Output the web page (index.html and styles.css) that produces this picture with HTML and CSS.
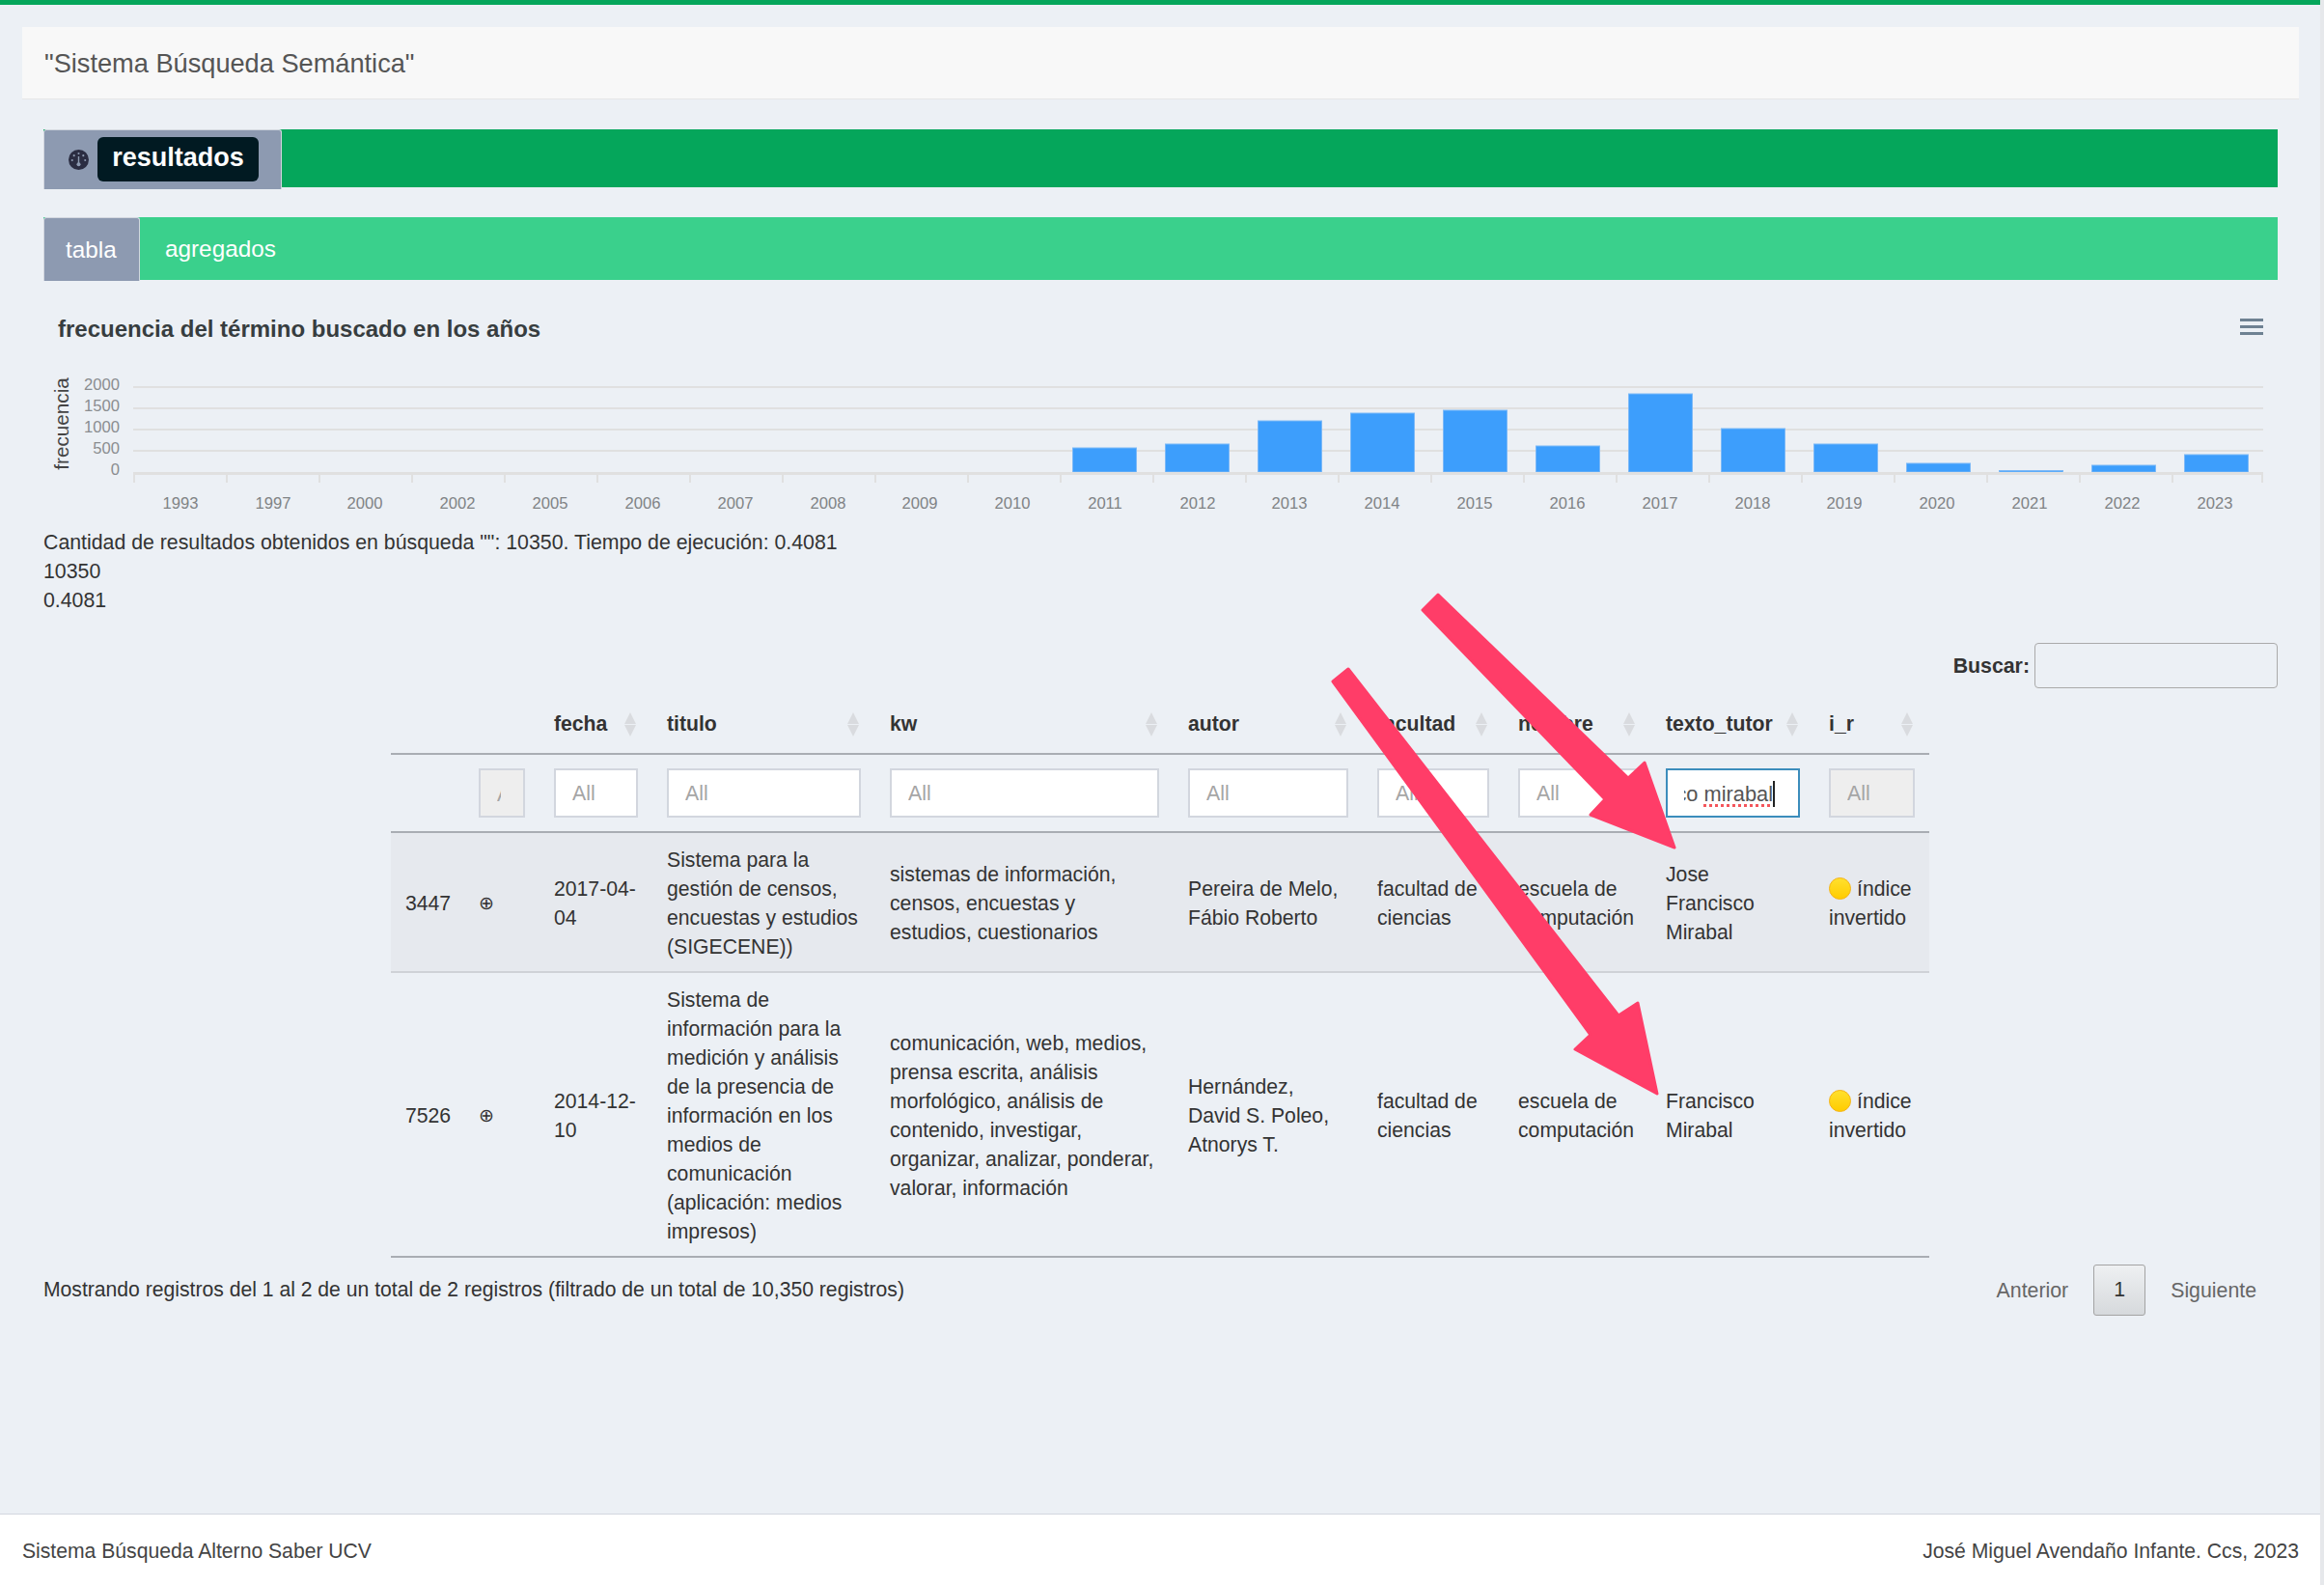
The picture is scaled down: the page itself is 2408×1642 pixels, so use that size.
FILE: index.html
```html
<!DOCTYPE html>
<html lang="es">
<head>
    <meta charset="UTF-8">
    <meta name="viewport" content="width=device-width, initial-scale=1.0">
    <title>Sistema Búsqueda Semántica</title>
    <link rel="stylesheet" href="styles.css">
</head>
<body>

    <div class="page">
        <div class="title-box">"Sistema Búsqueda Semántica"</div>

        <div class="content">
            <div class="main-tabs">
                <div class="main-tab">
                    <svg class="tab-icon" viewBox="0 0 24 24">
                        <circle cx="12" cy="12" r="12" fill="#2b2d42"/>
                        <g fill="#8d9ab1">
                            <circle cx="12" cy="4.5" r="1.2"/>
                            <circle cx="6.5" cy="7" r="1.2"/>
                            <circle cx="17.5" cy="7" r="1.2"/>
                            <circle cx="4.3" cy="12.5" r="1.2"/>
                            <circle cx="19.7" cy="12.5" r="1.2"/>
                            <rect x="11.2" y="8" width="1.6" height="9"/>
                            <circle cx="12" cy="17.5" r="2.3"/>
                        </g>
                    </svg>
                    <span class="chip">resultados</span>
                </div>
            </div>

            <div class="sub-tabs">
                <div class="sub-tab active">tabla</div>
                <div class="sub-tab">agregados</div>
            </div>

            <div class="chart-head">
                <h4>frecuencia del término buscado en los años</h4>
                <div class="burger"><span></span><span></span><span></span></div>
            </div>

            <svg class="chart" width="2330" height="160" viewBox="45 380 2330 160">
                <g stroke="#e0e0e0" stroke-width="2">
                    <line x1="138" x2="2345" y1="401" y2="401"/>
                    <line x1="138" x2="2345" y1="423" y2="423"/>
                    <line x1="138" x2="2345" y1="445" y2="445"/>
                    <line x1="138" x2="2345" y1="467" y2="467"/>
                </g>
                <g fill="#3d9efc" stroke="#7db9f7" stroke-width="1">
                    <rect x="1111.5" y="464" width="66" height="25"/>
                    <rect x="1207.5" y="460" width="66" height="29"/>
                    <rect x="1303.5" y="436" width="66" height="53"/>
                    <rect x="1399.5" y="428" width="66" height="61"/>
                    <rect x="1495.5" y="425" width="66" height="64"/>
                    <rect x="1591.5" y="462" width="66" height="27"/>
                    <rect x="1687.5" y="408" width="66" height="81"/>
                    <rect x="1783.5" y="444" width="66" height="45"/>
                    <rect x="1879.5" y="460" width="66" height="29"/>
                    <rect x="1975.5" y="480" width="66" height="9"/>
                    <rect x="2071.5" y="487.5" width="66" height="1.5"/>
                    <rect x="2167.5" y="482" width="66" height="7"/>
                    <rect x="2263.5" y="471" width="66" height="18"/>
                </g>
                <line x1="138" x2="2345" y1="490.5" y2="490.5" stroke="#e0e0e0" stroke-width="3"/>
                <g stroke="#e0e0e0" stroke-width="2">
                    <path d="M139 490v10M235 490v10M331 490v10M427 490v10M523 490v10M619 490v10M715 490v10M811 490v10M907 490v10M1003 490v10M1099 490v10M1195 490v10M1291 490v10M1387 490v10M1483 490v10M1579 490v10M1675 490v10M1771 490v10M1867 490v10M1963 490v10M2059 490v10M2155 490v10M2251 490v10M2344 490v10"/>
                </g>
                <g class="axis-y">
                    <text x="124" y="404">2000</text>
                    <text x="124" y="426">1500</text>
                    <text x="124" y="448">1000</text>
                    <text x="124" y="470">500</text>
                    <text x="124" y="492">0</text>
                </g>
                <g class="axis-x">
                    <text x="187" y="527">1993</text>
                    <text x="283" y="527">1997</text>
                    <text x="378" y="527">2000</text>
                    <text x="474" y="527">2002</text>
                    <text x="570" y="527">2005</text>
                    <text x="666" y="527">2006</text>
                    <text x="762" y="527">2007</text>
                    <text x="858" y="527">2008</text>
                    <text x="953" y="527">2009</text>
                    <text x="1049" y="527">2010</text>
                    <text x="1145" y="527">2011</text>
                    <text x="1241" y="527">2012</text>
                    <text x="1336" y="527">2013</text>
                    <text x="1432" y="527">2014</text>
                    <text x="1528" y="527">2015</text>
                    <text x="1624" y="527">2016</text>
                    <text x="1720" y="527">2017</text>
                    <text x="1816" y="527">2018</text>
                    <text x="1911" y="527">2019</text>
                    <text x="2007" y="527">2020</text>
                    <text x="2103" y="527">2021</text>
                    <text x="2199" y="527">2022</text>
                    <text x="2295" y="527">2023</text>
                </g>
                <text class="axis-title" transform="translate(71 439) rotate(-90)">frecuencia</text>
            </svg>

            <div class="summary">
                <div>Cantidad de resultados obtenidos en búsqueda "": 10350. Tiempo de ejecución: 0.4081</div>
                <div>10350</div>
                <div>0.4081</div>
            </div>

            <div class="search-row">
                <label>Buscar:</label>
                <input class="search-input" type="text">
            </div>

            <table class="results">
                <colgroup>
                    <col class="c-id"><col class="c-exp"><col class="c-fecha"><col class="c-titulo"><col class="c-kw">
                    <col class="c-autor"><col class="c-fac"><col class="c-esc"><col class="c-tutor"><col class="c-ir">
                </colgroup>
                <thead>
                    <tr class="head-row">
                        <th></th>
                        <th></th>
                        <th><div class="th-in">fecha<span class="sort"></span></div></th>
                        <th><div class="th-in">titulo<span class="sort"></span></div></th>
                        <th><div class="th-in">kw<span class="sort"></span></div></th>
                        <th><div class="th-in">autor<span class="sort"></span></div></th>
                        <th><div class="th-in">facultad<span class="sort"></span></div></th>
                        <th><div class="th-in">nombre<span class="sort"></span></div></th>
                        <th><div class="th-in">texto_tutor<span class="sort"></span></div></th>
                        <th><div class="th-in">i_r<span class="sort"></span></div></th>
                    </tr>
                    <tr class="filter-row">
                        <td></td>
                        <td><input class="filter off tiny" placeholder="All" disabled></td>
                        <td><input class="filter" placeholder="All"></td>
                        <td><input class="filter" placeholder="All"></td>
                        <td><input class="filter" placeholder="All"></td>
                        <td><input class="filter" placeholder="All"></td>
                        <td><input class="filter" placeholder="All"></td>
                        <td><input class="filter" placeholder="All"></td>
                        <td><div class="filter focused"><div class="typed-clip"><span class="typed">francisco <u>mirabal</u></span></div></div></td>
                        <td><input class="filter off" placeholder="All" disabled></td>
                    </tr>
                </thead>
                <tbody>
                    <tr class="odd">
                        <td>3447</td>
                        <td class="exp">⊕</td>
                        <td>2017-04-04</td>
                        <td>Sistema para la gestión de censos, encuestas y estudios (SIGECENE))</td>
                        <td>sistemas de información, censos, encuestas y estudios, cuestionarios</td>
                        <td>Pereira de Melo, Fábio Roberto</td>
                        <td>facultad de ciencias</td>
                        <td>escuela de computación</td>
                        <td>Jose Francisco Mirabal</td>
                        <td><span class="dot"></span>índice invertido</td>
                    </tr>
                    <tr>
                        <td>7526</td>
                        <td class="exp">⊕</td>
                        <td>2014-12-10</td>
                        <td>Sistema de información para la medición y análisis de la presencia de información en los medios de comunicación (aplicación: medios impresos)</td>
                        <td>comunicación, web, medios, prensa escrita, análisis morfológico, análisis de contenido, investigar, organizar, analizar, ponderar, valorar, información</td>
                        <td>Hernández, David S. Poleo, Atnorys T.</td>
                        <td>facultad de ciencias</td>
                        <td>escuela de computación</td>
                        <td>Francisco Mirabal</td>
                        <td><span class="dot"></span>índice invertido</td>
                    </tr>
                </tbody>
            </table>

            <div class="table-foot">
                <div class="table-info">Mostrando registros del 1 al 2 de un total de 2 registros (filtrado de un total de 10,350 registros)</div>
                <div class="pager">
                    <span>Anterior</span>
                    <span class="page-current">1</span>
                    <span>Siguiente</span>
                </div>
            </div>
        </div>
    </div>

    <footer class="footer">
        <div>Sistema Búsqueda Alterno Saber UCV</div>
        <div>José Miguel Avendaño Infante. Ccs, 2023</div>
    </footer>

    <!-- flechas pintadas encima de la captura -->
    <svg class="arrows" width="2404" height="1642" viewBox="0 0 2404 1642">
        <path d="M1490 616 L1687 806 L1704 790 L1735 878 L1648 844 L1663 828 L1474 632 Z"/>
        <path d="M1397 693 L1677 1052 L1697 1039 L1717 1133 L1632 1087 L1648 1072 L1381 706 Z"/>
    </svg>

</body>
</html>
```

FILE: styles.css
```css
html {
    margin: 0;
    height: 100%;
    background: #e6e8eb;
}
body {
    margin: 0;
    width: 2404px;
    font-family: "Liberation Sans", Arial, sans-serif;
    font-size: 21.3px;
    line-height: 30px;
    color: #333;
    background: #ecf0f5;
    border-top: 5px solid #05a65b;
    box-sizing: border-box;
    position: relative;
    height: 1642px;
    overflow: hidden;
}
.page {
    padding: 23px 22px 0 23px;
}
.title-box {
    height: 75px;
    background: #f8f8f8;
    color: #555;
    font-size: 27.2px;
    line-height: 75px;
    padding-left: 23px;
    border-bottom: 1px solid #e7e7e7;
    box-sizing: border-box;
}
.content {
    padding: 31px 22px 0 22px;
}
.main-tabs {
    height: 60px;
    background: #05a65b;
}
.main-tab {
    width: 247px;
    height: 62px;
    background: #8d9ab1;
    border: 1px solid #d2d6de;
    border-bottom: none;
    border-radius: 3px 3px 0 0;
    box-sizing: border-box;
    display: flex;
    align-items: center;
    padding-left: 25px;
    gap: 9px;
}
.tab-icon {
    width: 21px;
    height: 21px;
}
.chip {
    background: #011a22;
    color: #fff;
    font-size: 27px;
    font-weight: bold;
    width: 167px;
    height: 46px;
    line-height: 43px;
    text-align: center;
    border-radius: 6px;
    margin-bottom: 2px;
}
.sub-tabs {
    margin-top: 31px;
    height: 65px;
    background: #3ad08c;
    display: flex;
    color: #fff;
    font-size: 24.3px;
    line-height: 65px;
}
.sub-tab {
    padding-left: 26px;
}
.sub-tab.active {
    background: #8d9ab1;
    border: 1px solid #d2d6de;
    border-bottom: none;
    border-radius: 3px 3px 0 0;
    box-sizing: border-box;
    width: 100px;
    height: 66px;
    padding-left: 22px;
}
.chart-head {
    display: flex;
    justify-content: space-between;
    align-items: center;
    height: 46px;
    margin-top: 28px;
    padding: 0 15px;
}
.chart-head h4 {
    margin: 0;
    font-size: 24px;
    color: #373d3f;
}
.burger {
    width: 24px;
    display: flex;
    flex-direction: column;
    gap: 4px;
    margin-bottom: 6px;
}
.burger span {
    height: 3px;
    background: #6e8192;
}
.chart {
    display: block;
    margin-top: 16px;
}
.axis-y text {
    font-size: 16.6px;
    fill: #8a8d90;
    text-anchor: end;
}
.axis-x text {
    font-size: 16.6px;
    fill: #808385;
    text-anchor: middle;
}
.axis-title {
    font-size: 20.7px;
    fill: #444;
    text-anchor: middle;
}
.summary {
    margin-top: 7px;
}
.search-row {
    display: flex;
    justify-content: flex-end;
    align-items: center;
    gap: 5px;
    margin-top: 29px;
    height: 47px;
}
.search-row label {
    font-weight: bold;
}
.search-input {
    width: 252px;
    height: 47px;
    box-sizing: border-box;
    background: transparent;
    border: 1px solid #aaa;
    border-radius: 4px;
}
.results {
    table-layout: fixed;
    width: 1594px;
    margin: 5px 0 0 360px;
    border-collapse: collapse;
    font-size: 21.2px;
}
.c-id { width: 76px; }
.c-exp { width: 78px; }
.c-fecha { width: 117px; }
.c-titulo { width: 231px; }
.c-kw { width: 309px; }
.c-autor { width: 196px; }
.c-fac { width: 146px; }
.c-esc { width: 153px; }
.c-tutor { width: 169px; }
.c-ir { width: 119px; }
.results th {
    height: 60px;
    padding: 2px 15px 0;
    text-align: left;
    border-bottom: 2px solid #a9adb3;
}
.th-in {
    display: flex;
    justify-content: space-between;
    align-items: center;
}
.sort {
    width: 0;
    margin-right: 2px;
    position: relative;
    height: 25px;
    border-left: 6px solid transparent;
    border-right: 6px solid transparent;
}
.sort::before,
.sort::after {
    content: "";
    position: absolute;
    left: -6px;
    border-left: 6px solid transparent;
    border-right: 6px solid transparent;
}
.sort::before {
    top: 0;
    border-bottom: 12px solid #d9dbdf;
}
.sort::after {
    bottom: 0;
    border-top: 12px solid #d9dbdf;
}
.filter-row td {
    padding: 14px 15px;
    border-bottom: 2px solid #a9adb3;
}
.filter {
    display: block;
    width: 100%;
    height: 51px;
    box-sizing: border-box;
    padding: 2px 17px 0;
    font: 21.3px "Liberation Sans", Arial, sans-serif;
    color: #555;
    background: #fff;
    border: 2px solid #d2d6de;
}
.filter::placeholder {
    color: #a5a5a5;
    opacity: 1;
}
.filter.off {
    background: #eee;
}
.filter.tiny {
    padding: 4px 23px 0 17px;
}
.filter.focused {
    border: 2px solid #3c8dbc;
    padding: 1px 24px 0 17px;
    font-size: 21.8px;
}
.typed-clip {
    display: flex;
    justify-content: flex-end;
    overflow: hidden;
    white-space: nowrap;
    line-height: 47px;
    padding-right: 2px;
}
.typed {
    flex: none;
    position: relative;
}
.typed::after {
    content: "";
    position: absolute;
    right: -2px;
    top: 10px;
    height: 27px;
    width: 2px;
    background: #222;
}
.typed u {
    text-decoration: underline dotted #f4565c 3px;
    text-underline-offset: 3px;
}
.results tbody td {
    padding: 13px 15px 10px;
    border-bottom: 2px solid #cfd2d7;
}
.results tbody tr:last-child td {
    border-bottom-color: #a9adb3;
}
.odd {
    background: #e6e9ee;
}
.results tbody td.exp {
    font-size: 19px;
}
.dot {
    display: inline-block;
    width: 23px;
    height: 23px;
    margin-right: 6px;
    vertical-align: -4px;
    border-radius: 50%;
    box-sizing: border-box;
    background: linear-gradient(#ffe02e, #ffcc00);
    border: 1px solid #f5b41a;
}
.table-foot {
    display: flex;
    justify-content: space-between;
    align-items: center;
    margin-top: 7px;
}
.table-info {
    font-size: 21.15px;
    margin-bottom: 2px;
}
.pager {
    display: flex;
    align-items: center;
    gap: 26px;
    color: #666;
    padding-right: 22px;
}
.page-current {
    width: 54px;
    height: 53px;
    line-height: 51px;
    box-sizing: border-box;
    text-align: center;
    color: #333;
    border: 1px solid #a3a3a3;
    border-radius: 3px;
    background: linear-gradient(#eef0f2, #d6d9dc);
}
.footer {
    position: absolute;
    left: 0;
    right: 0;
    bottom: 0;
    height: 74px;
    box-sizing: border-box;
    background: #fff;
    border-top: 1px solid #d2d6de;
    display: flex;
    justify-content: space-between;
    align-items: center;
    padding: 2px 22px 0 23px;
    color: #444;
    font-size: 21.15px;
}
.arrows {
    position: absolute;
    left: 0;
    top: -5px;
    pointer-events: none;
}
.arrows path {
    fill: #ff3d68;
    stroke: #ff3d68;
    stroke-width: 3;
    stroke-linejoin: round;
}
```
